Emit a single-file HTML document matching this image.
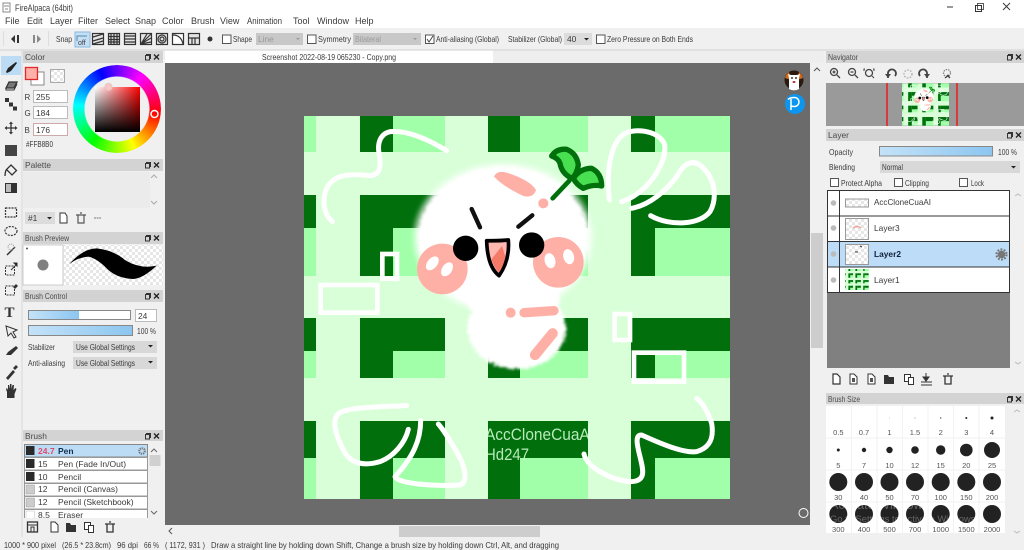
<!DOCTYPE html>
<html><head><meta charset="utf-8"><title>FireAlpaca</title>
<style>
html,body{margin:0;padding:0;background:#f0f0f0;width:1024px;height:550px;overflow:hidden}
#root{position:relative;width:1024px;height:550px;overflow:hidden;filter:blur(.3px)}
svg{position:absolute;left:0;top:0}
text{font-family:"Liberation Sans",sans-serif;font-size:8.4px;fill:#3a3a3a}
.h{fill:#4a4a4a}
.hd{fill:#d3d3d3}
.ic{fill:#333;stroke:none}
.il{fill:none;stroke:#333;stroke-width:1.2}
.sel{fill:#d8d8d8}
.sz text{font-size:7.5px;text-anchor:middle;fill:#555}
.dots circle{fill:#222}
.wh{fill:none;stroke:#fff;stroke-width:15;stroke-linecap:round;stroke-linejoin:round}
.wr{fill:none;stroke:#fff;stroke-width:14}
#wheel{position:absolute;left:73px;top:65px;width:88px;height:88px;border-radius:50%;background:conic-gradient(from 36deg,#f0f,#f00 60deg,#ff0 120deg,#0f0 180deg,#0ff 240deg,#00f 300deg,#f0f 360deg);-webkit-mask:radial-gradient(circle,transparent 32px,#000 33px);mask:radial-gradient(circle,transparent 32px,#000 33px)}
#sq{position:absolute;left:95px;top:87px;width:45px;height:45px;background:linear-gradient(to bottom,rgba(0,0,0,0),#000),linear-gradient(to right,#fff,#f00)}
</style></head><body><div id="root">
<svg width="1024" height="550" viewBox="0 0 1024 550" xmlns="http://www.w3.org/2000/svg">
<defs>
<pattern id="chk" width="6" height="6" patternUnits="userSpaceOnUse"><rect width="6" height="6" fill="#fff"/><rect width="3" height="3" fill="#e6e6e6"/><rect x="3" y="3" width="3" height="3" fill="#e6e6e6"/></pattern>
<linearGradient id="bl" x1="0" x2="1" y1="0" y2="0"><stop offset="0" stop-color="#c4e2f8"/><stop offset="1" stop-color="#8cc6f0"/></linearGradient>
<filter id="fz" x="-20%" y="-20%" width="140%" height="140%" color-interpolation-filters="sRGB"><feTurbulence type="fractalNoise" baseFrequency=".14" numOctaves="2" seed="3"/><feDisplacementMap in="SourceGraphic" scale="24" xChannelSelector="R" yChannelSelector="G"/><feGaussianBlur stdDeviation="4"/></filter>
<filter id="hl" x="-20%" y="-20%" width="140%" height="140%"><feGaussianBlur stdDeviation="9"/></filter>
<clipPath id="cvc"><rect x="304" y="116" width="426" height="383"/></clipPath>
<clipPath id="txc"><rect x="485" y="415" width="103" height="60"/></clipPath>
<clipPath id="brc"><rect x="23" y="444" width="126" height="74"/></clipPath>
<g id="pb"><rect x="1.500" y=".5" width="4" height="4" fill="none" stroke="#333"/><rect x=".5" y="1.500" width="4" height="4.500" fill="#d3d3d3" stroke="#333"/><path d="M9 .5l5 5M14 .5l-5 5" stroke="#222" stroke-width="1.300"/></g>
<g id="pat">
<rect x="304" y="116" width="426" height="383" fill="#d8ffd8"/>
<g fill="#a0ffa8">
<rect x="304" y="116" width="12" height="36"/><rect x="304" y="195" width="12" height="81"/><rect x="304" y="318" width="12" height="60"/><rect x="304" y="421" width="12" height="78"/>
<rect x="360" y="116" width="85" height="36"/><rect x="360" y="195" width="85" height="81"/><rect x="360" y="318" width="85" height="60"/><rect x="360" y="421" width="85" height="78"/>
<rect x="488" y="116" width="100" height="36"/><rect x="488" y="195" width="100" height="81"/><rect x="488" y="318" width="100" height="60"/><rect x="488" y="421" width="100" height="78"/>
<rect x="631" y="116" width="99" height="36"/><rect x="631" y="195" width="99" height="81"/><rect x="631" y="318" width="99" height="60"/><rect x="631" y="421" width="99" height="78"/>
</g>
<g fill="#006f0c">
<rect x="304" y="195" width="12" height="33"/><rect x="304" y="318" width="12" height="33"/><rect x="304" y="421" width="12" height="37"/>
<rect x="360" y="116" width="33" height="36"/><rect x="360" y="195" width="33" height="81"/><rect x="360" y="318" width="33" height="60"/><rect x="360" y="421" width="33" height="78"/>
<rect x="393" y="195" width="52" height="33"/><rect x="393" y="318" width="52" height="33"/><rect x="393" y="421" width="52" height="37"/>
<rect x="488" y="116" width="32" height="36"/><rect x="488" y="195" width="32" height="81"/><rect x="488" y="318" width="32" height="60"/><rect x="488" y="421" width="32" height="78"/>
<rect x="520" y="195" width="68" height="33"/><rect x="520" y="318" width="68" height="33"/><rect x="520" y="421" width="68" height="37"/>
<rect x="631" y="116" width="24" height="36"/><rect x="631" y="195" width="24" height="81"/><rect x="631" y="318" width="24" height="60"/><rect x="631" y="421" width="24" height="78"/>
<rect x="655" y="195" width="75" height="33"/><rect x="655" y="318" width="75" height="33"/><rect x="655" y="421" width="75" height="37"/>
</g>
</g>
<g id="art">
<use href="#pat"/>
<g transform="translate(300,110) scale(.33333)">
<g fill="#fff" opacity=".75" filter="url(#hl)"><ellipse cx="610" cy="385" rx="268" ry="225"/></g>
<g filter="url(#fz)" fill="#fff">
<ellipse cx="610" cy="385" rx="255" ry="215"/>
<ellipse cx="650" cy="655" rx="148" ry="122"/>
<ellipse cx="640" cy="570" rx="140" ry="70"/>
</g>
<path class="wh" d="M440 122C380 85 320 60 270 65C240 72 232 100 237 130C245 170 240 195 210 197C150 190 90 190 75 250C65 290 80 320 97 335"/>
<path class="wh" d="M928 270C920 200 925 100 975 70C1020 50 1090 70 1095 110C1095 170 1040 250 965 275"/>
<path class="wh" d="M995 295C1050 285 1100 240 1130 200C1150 160 1180 145 1205 170C1250 210 1250 270 1230 305C1200 345 1110 350 1052 317"/>
<rect class="wr" x="247" y="432" width="44" height="74"/>
<rect class="wr" x="62" y="525" width="170" height="83"/>
<circle cx="427" cy="477" r="76" fill="#ffb0a6"/><circle cx="775" cy="457" r="76" fill="#ffb0a6"/>
<g fill="#fff"><ellipse cx="397" cy="460" rx="15" ry="24" transform="rotate(40 397 460)"/><ellipse cx="441" cy="478" rx="15" ry="23" transform="rotate(35 441 478)"/><ellipse cx="750" cy="452" rx="16" ry="23" transform="rotate(-15 750 452)"/><ellipse cx="806" cy="440" rx="16" ry="23" transform="rotate(-15 806 440)"/></g>
<circle cx="497" cy="415" r="38" fill="#000"/><circle cx="695" cy="405" r="38" fill="#000"/>
<path d="M515 297L540 352M655 350L697 316" stroke="#111" stroke-width="13" stroke-linecap="round" fill="none"/>
<path d="M560 392Q595 393 625 390Q630 450 597 497Q562 470 560 392Z" fill="#ffb8b0" stroke="#000" stroke-width="11" stroke-linejoin="round"/>
<path d="M606 408L616 440Q610 470 597 488Q582 472 574 448Z" fill="#f57a68"/>
<path d="M582 200Q590 180 620 188Q690 210 708 240Q700 265 670 258Q610 230 582 200Z" fill="#ffb0a6"/>
<circle cx="730" cy="280" r="15" fill="#ffb0a6"/>
<path d="M758 265L808 212" stroke="#00700c" stroke-width="14" stroke-linecap="round" fill="none"/>
<path d="M755 138Q770 115 800 118Q830 130 835 165Q830 195 815 205Q785 190 780 160Q775 145 755 138Z" fill="#48e050" stroke="#00700c" stroke-width="16" stroke-linejoin="round"/>
<path d="M820 205Q840 175 875 175Q905 190 905 228Q880 222 850 235Q830 225 820 205Z" fill="#48e050" stroke="#00700c" stroke-width="16" stroke-linejoin="round"/>
<g transform="translate(0,570)">
<circle cx="632" cy="38" r="15" fill="#ffb0a6"/>
<path d="M672 38L762 32" stroke="#ffb0a6" stroke-width="28" stroke-linecap="round" fill="none"/>
<path d="M705 165L758 100" stroke="#ffb0a6" stroke-width="31" stroke-linecap="round" fill="none"/>
<path class="wh" d="M320 317C260 320 170 320 125 335C90 350 105 400 130 450C150 490 190 500 240 485C280 470 315 430 325 388"/>
<path class="wh" d="M362 362C362 420 340 470 285 530C290 550 400 560 480 555C505 545 495 500 475 465C455 430 435 395 415 372"/>
<path class="wh" d="M852 462C860 500 930 540 990 545C1040 545 1030 510 1020 470C1010 430 1005 405 1025 405C1080 430 1150 460 1190 455C1240 440 1240 400 1235 370C1225 340 1210 310 1190 295"/>
<rect class="wr" x="944" y="42" width="46" height="78"/>
<rect class="wr" x="1002" y="158" width="150" height="87"/>
</g>
</g>
</g>
</defs>

<!-- title + menu -->
<rect width="1024" height="28" fill="#fff"/>
<rect x="3" y="3" width="7" height="9" fill="none" stroke="#888" stroke-width="1"/><path d="M4 6h5M5 9h3" stroke="#888"/>
<text x="15" y="11" style="font-size:9px" textLength="58" lengthAdjust="spacingAndGlyphs">FireAlpaca (64bit)</text>
<path d="M947 7h6" stroke="#333" stroke-width="1"/>
<rect x="975.500" y="5.500" width="6" height="6" fill="#fff" stroke="#333"/><rect x="977.500" y="3.500" width="6" height="6" fill="none" stroke="#333" stroke-width=".8"/>
<path d="M1003 3l7 7M1010 3l-7 7" stroke="#333" stroke-width=".9"/>
<g>
<text x="5" y="24" style="font-size:9px">File</text><text x="27" y="24" style="font-size:9px">Edit</text><text x="50" y="24" style="font-size:9px">Layer</text><text x="78" y="24" style="font-size:9px">Filter</text><text x="105" y="24" style="font-size:9px">Select</text><text x="135" y="24" style="font-size:9px">Snap</text><text x="162" y="24" style="font-size:9px">Color</text><text x="191" y="24" style="font-size:9px">Brush</text><text x="220" y="24" style="font-size:9px">View</text><text x="247" y="24" style="font-size:9px" textLength="35" lengthAdjust="spacingAndGlyphs">Animation</text><text x="293" y="24" style="font-size:9px">Tool</text><text x="317" y="24" style="font-size:9px">Window</text><text x="355" y="24" style="font-size:9px">Help</text>
</g>

<!-- toolbar -->
<rect y="28" width="1024" height="22" fill="#f0f0f0"/>
<path d="M0 50H1024" stroke="#cfcfcf"/>
<path d="M3.500 31v15M48.500 31v15" stroke="#ddd"/>
<path d="M17 35v8h2v-8zM15 35l-4 4 4 4z" fill="#333"/>
<path d="M33 35v8h2v-8zM37 35l4 4-4 4z" fill="#888"/>
<text x="56" y="42" textLength="16" lengthAdjust="spacingAndGlyphs">Snap</text>
<rect x="75" y="32" width="15" height="15" fill="#c5dff5" stroke="#88b8e0"/>
<text x="78" y="45" style="font-size:7px">off</text><path d="M77 41v-5h10" stroke="#58a" fill="none"/>
<g class="il" stroke-width=".9">
<rect x="92.500" y="33.500" width="11" height="11" fill="#e4e4e4"/><path d="M93 37l10-3M93 41l10-3M93 44l10-3"/>
<rect x="108.500" y="33.500" width="11" height="11" fill="#ddd"/><path d="M111 34v10M114 34v10M117 34v10M109 36.500h10M109 39.500h10M109 42h10"/>
<rect x="124.500" y="33.500" width="11" height="11" fill="#e4e4e4"/><path d="M125 36h10M125 39h10M125 42h10"/>
<rect x="140.500" y="33.500" width="11" height="11" fill="#e4e4e4"/><path d="M141 44l10-10M141 44l10-6M141 44l6-10M141 44l10-2"/>
<rect x="156.500" y="33.500" width="11" height="11" fill="#e4e4e4"/><circle cx="162" cy="39" r="4"/><circle cx="162" cy="39" r="2"/>
<rect x="172.500" y="33.500" width="11" height="11" fill="#fff"/><path d="M173 35q8 0 10 9"/>
<rect x="188.500" y="33.500" width="11" height="11" fill="#e4e4e4"/><path d="M189 38h10M192 38v6M195 38v6"/>
</g>
<circle cx="210" cy="39" r="2.500" fill="#333"/>
<rect x="222.500" y="35" width="8.500" height="8.500" fill="#fff" stroke="#555"/>
<text x="233" y="42" textLength="19" lengthAdjust="spacingAndGlyphs">Shape</text>
<rect x="256" y="33" width="47" height="12" fill="#c8c8c8"/><text x="258" y="42" style="fill:#999">Line</text><path d="M296 38l4 0-2 2z" fill="#999"/>
<rect x="307.500" y="35" width="8.500" height="8.500" fill="#fff" stroke="#555"/>
<text x="318" y="42" textLength="33" lengthAdjust="spacingAndGlyphs">Symmetry</text>
<rect x="353" y="33" width="68" height="12" fill="#c8c8c8"/><text x="355" y="42" style="fill:#999" textLength="26" lengthAdjust="spacingAndGlyphs">Bilateral</text><path d="M413 38l4 0-2 2z" fill="#999"/>
<rect x="425.500" y="35" width="8.500" height="8.500" fill="#fff" stroke="#555"/><path d="M427 39l2 3 4-6" stroke="#444" fill="none"/>
<text x="436" y="42" textLength="63" lengthAdjust="spacingAndGlyphs">Anti-aliasing (Global)</text>
<text x="508" y="42" textLength="54" lengthAdjust="spacingAndGlyphs">Stabilizer (Global)</text>
<rect x="564" y="33" width="28" height="12" fill="#dcdcdc"/><text x="567" y="42">40</text><path d="M584 38l5 0-2.500 2.500z" fill="#222"/>
<rect x="596.500" y="35" width="8.500" height="8.500" fill="#fff" stroke="#555"/>
<text x="607" y="42" textLength="86" lengthAdjust="spacingAndGlyphs">Zero Pressure on Both Ends</text>

<!-- tab -->
<rect x="165" y="50.500" width="328" height="13" fill="#fff"/>
<text x="262" y="60" style="font-size:8px" textLength="134" lengthAdjust="spacingAndGlyphs">Screenshot 2022-08-19 065230 - Copy.png</text>
<rect x="493" y="51" width="331" height="12" fill="#eeeeee"/>

<!-- workspace -->
<rect x="165" y="63" width="645" height="462" fill="#6b6b6b"/>
<use href="#art" clip-path="url(#cvc)"/>
<g clip-path="url(#txc)"><text x="485" y="440" style="font-size:16.500px;fill:#d8ffd8" fill-opacity=".85" textLength="109" lengthAdjust="spacingAndGlyphs">AccCloneCuaAI</text><text x="485" y="460" style="font-size:16.500px;fill:#d8ffd8" fill-opacity=".85" textLength="44" lengthAdjust="spacingAndGlyphs">Hd247</text></g>
<circle cx="794" cy="80" r="9.500" fill="#2a1a10"/><path d="M785 78a9.500 9.500 0 0 1 4-6l2 8zM803 78a9.500 9.500 0 0 0-4-6l-2 8z" fill="#d06a1c"/><path d="M789 89v-11l-1-4 3 1h6l3-1-1 4v11a9.500 9.500 0 0 1-10 0z" fill="#fff"/><circle cx="792" cy="78" r=".9" fill="#000"/><circle cx="796" cy="78" r=".9" fill="#000"/><ellipse cx="794" cy="82" rx="1.500" ry="1" fill="#a33"/>
<circle cx="795" cy="104" r="10" fill="#0c96f0"/><path d="M791 110v-11M788 99.500q2-2 6.500-2a4 4 0 0 1 0 9q-2 0-3.500-.5" stroke="#fff" stroke-width="1.500" fill="none"/>
<circle cx="803.500" cy="513" r="4.500" fill="none" stroke="#fff" stroke-width="1"/>
<!-- scrollbars -->
<rect x="810" y="63" width="14" height="462" fill="#f0f0f0"/>
<rect x="811" y="233" width="12" height="115" fill="#cdcdcd"/>
<path d="M814 71l3-3 3 3" fill="none" stroke="#555"/>
<rect x="165" y="525" width="659" height="12" fill="#f0f0f0"/>
<rect x="399" y="526" width="141" height="11" fill="#cdcdcd"/>
<path d="M172 528l-3 3 3 3" fill="none" stroke="#555"/>

<!-- tool column -->
<rect x="1" y="56" width="20" height="19" fill="#bcdcf5"/>
<path d="M22 50V537" stroke="#d8d8d8"/>
<path d="M6 72l2-4 8-6 1 1-6 8-4 2z" fill="#222"/>
<path d="M6 88l3-6h8l-3 6z" fill="#777" stroke="#333" stroke-width="1.300"/><path d="M6 88v2h8l3-6" fill="none" stroke="#333"/>
<g class="ic"><rect x="5" y="98" width="4" height="4"/><rect x="9" y="102.500" width="4" height="4"/><rect x="13" y="106.500" width="4" height="4"/></g>
<path d="M11 123v10M6 128h10" stroke="#333" stroke-width="1.300"/><path d="M11 121.500l-2 2.500h4zM11 134.500l-2-2.500h4zM4.500 128l2.500-2v4zM17.500 128l-2.500-2v4z" class="ic"/>
<rect x="5" y="145" width="12" height="11" fill="#444"/>
<path d="M11 165l5.500 5.500-4.500 4.500-5.500-5.500zM6 170q-1 3-1 6" fill="none" stroke="#333" stroke-width="1.300"/>
<rect x="5" y="183" width="12" height="10" fill="#333"/><rect x="6" y="184" width="5" height="8" fill="#bbb"/>
<rect x="5.500" y="208" width="11" height="9" fill="none" stroke="#333" stroke-width="1.200" stroke-dasharray="2 1"/>
<ellipse cx="11" cy="231" rx="6" ry="4.500" fill="none" stroke="#333" stroke-width="1.200" stroke-dasharray="2 1.200"/>
<path d="M7 255l8-8" stroke="#333" stroke-width="1.500"/><circle cx="11" cy="247" r="3" fill="none" stroke="#999" stroke-dasharray="1 1"/>
<rect x="5.500" y="266" width="9" height="9" fill="none" stroke="#333" stroke-dasharray="2 1"/><path d="M11 270l5-5M17 263l-3 0 3 3z" stroke="#333"/>
<rect x="5.500" y="286" width="9" height="9" fill="none" stroke="#333" stroke-dasharray="2 1"/><path d="M13 287l3-3 2 2-3 3z" fill="#333"/>
<text x="4.500" y="317" style="font-family:'Liberation Serif',serif;font-size:15px;font-weight:bold;fill:#333">T</text>
<path d="M6 326l11 4-4 2 3 5-2 1-3-5-3 3z" fill="#eee" stroke="#333"/>
<path d="M6 355l2-3 8-6 2 2-7 7z" fill="#333"/>
<path d="M6 378l7-8 2 2-7 8zM13 368l3-3 2 2-3 3z" fill="#333"/>
<path d="M7 398v-6l-1-3 1-1 1 2v-5h1l.5 4 .5-5h1.500v5l1-4h1.500l-.5 5 2-2 1 1-2 5v4z" fill="#333"/>

<!-- left panels -->
<g>
<rect x="23" y="51" width="140" height="12" class="hd"/><text class="h" x="25" y="60">Color</text>
<use href="#pb" x="145" y="54"/>
<rect x="31" y="72" width="13" height="13" fill="#fff" stroke="#888"/>
<rect x="25.500" y="67.500" width="12" height="12" fill="#ffb0a8" stroke="#e02828" stroke-width="1.300"/>
<rect x="50.500" y="69.500" width="14" height="13" fill="url(#chk)" stroke="#aaa"/>
<text x="24.500" y="100" style="font-size:8px">R</text><rect x="33.500" y="90.500" width="34" height="12" fill="#fff" stroke="#bbb"/><text x="36" y="100">255</text>
<text x="24.500" y="116" style="font-size:8px">G</text><rect x="33.500" y="106.500" width="34" height="12" fill="#fff" stroke="#bbb"/><text x="36" y="116">184</text>
<text x="24.500" y="133" style="font-size:8px">B</text><rect x="33.500" y="123.500" width="34" height="12" fill="#fff" stroke="#caa"/><text x="36" y="133">176</text>
<text x="26" y="147" style="font-size:7.800px" textLength="27" lengthAdjust="spacingAndGlyphs">#FFB8B0</text>

<rect x="23" y="159" width="140" height="12" class="hd"/><text class="h" x="25" y="168">Palette</text>
<use href="#pb" x="145" y="162"/>
<rect x="23" y="172" width="127" height="36" fill="#ebebeb"/>
<path d="M151 178l3-3 3 3M151 201l3 3 3-3" fill="none" stroke="#aaa"/>
<rect x="25" y="212" width="30" height="12" fill="#dcdcdc"/><text x="28" y="221">#1</text><path d="M47 217l5 0-2.500 2.500z" fill="#222"/>
<path d="M60 213h5l2 3v7h-7z" fill="#fff" stroke="#333"/>
<path d="M76 215h10M78 215v8h6v-8M80 213h2" fill="none" stroke="#555" stroke-width="1.200"/>
<path d="M94 218h7" stroke="#777" stroke-dasharray="2 .6"/>

<rect x="23" y="232" width="140" height="12" class="hd"/><text class="h" x="25" y="241" textLength="44" lengthAdjust="spacingAndGlyphs">Brush Preview</text>
<use href="#pb" x="145" y="235"/>
<rect x="64" y="245" width="99" height="40" fill="url(#chk)"/>
<rect x="23" y="245" width="40" height="40" fill="#fff" stroke="#ccc"/>
<circle cx="43" cy="265" r="5.500" fill="#808080"/><circle cx="27" cy="248.500" r="1" fill="#555"/>
<path transform="translate(0,180) scale(.3333)" d="M208 252Q250 205 290 205Q340 210 375 240Q420 268 470 257Q430 295 400 297Q350 295 320 265Q290 235 265 230Q235 232 208 252Z" fill="#000"/>

<rect x="23" y="290" width="140" height="12" class="hd"/><text class="h" x="25" y="299" textLength="42" lengthAdjust="spacingAndGlyphs">Brush Control</text>
<use href="#pb" x="145" y="293"/>
<rect x="28.500" y="310.500" width="102" height="9" fill="#fff" stroke="#888"/><rect x="29" y="311" width="50" height="8" fill="url(#bl)"/>
<rect x="135.500" y="309.500" width="21" height="12" fill="#fff" stroke="#bbb"/><text x="138" y="319">24</text>
<rect x="28.500" y="325.500" width="104" height="10" fill="url(#bl)" stroke="#888"/><text x="137" y="334" textLength="19" lengthAdjust="spacingAndGlyphs">100 %</text>
<text x="28" y="350" textLength="27" lengthAdjust="spacingAndGlyphs">Stabilizer</text><rect x="73" y="341" width="84" height="12" class="sel"/><text x="76" y="350" textLength="59" lengthAdjust="spacingAndGlyphs">Use Global Settings</text><path d="M148 345l5 0-2.500 2.500z" fill="#222"/>
<text x="28" y="366" textLength="37" lengthAdjust="spacingAndGlyphs">Anti-aliasing</text><rect x="73" y="357" width="84" height="12" class="sel"/><text x="76" y="366" textLength="59" lengthAdjust="spacingAndGlyphs">Use Global Settings</text><path d="M148 361l5 0-2.500 2.500z" fill="#222"/>

<rect x="23" y="430" width="140" height="11" class="hd"/><text class="h" x="25" y="439">Brush</text>
<use href="#pb" x="145" y="433"/>
<g clip-path="url(#brc)">
<rect x="24.500" y="444.500" width="123" height="12.500" fill="#bcdcf5" stroke="#888"/>
<rect x="24.500" y="457.500" width="123" height="12.500" fill="#fff" stroke="#999"/>
<rect x="24.500" y="470.500" width="123" height="12.500" fill="#fff" stroke="#999"/>
<rect x="24.500" y="483.500" width="123" height="12.500" fill="#fff" stroke="#999"/>
<rect x="24.500" y="496.500" width="123" height="12.500" fill="#fff" stroke="#999"/>
<rect x="24.500" y="509.500" width="123" height="12.500" fill="#fff" stroke="#999"/>
<rect x="26" y="446" width="8.500" height="9" fill="#2a2a2a"/><rect x="26" y="459" width="8.500" height="9" fill="#2a2a2a"/><rect x="26" y="472" width="8.500" height="9" fill="#2a2a2a"/>
<rect x="26" y="485" width="8.500" height="9" fill="#ccc" stroke="#999" stroke-width=".5"/><rect x="26" y="498" width="8.500" height="9" fill="#ccc" stroke="#999" stroke-width=".5"/><rect x="26" y="511" width="8.500" height="9" fill="#fff" stroke="#bbb" stroke-width=".5"/>
<text x="38" y="454" style="font-size:8.500px;font-weight:bold;fill:#e04a68">24.7</text><text x="58" y="454" style="font-size:8.500px;font-weight:bold;fill:#103050">Pen</text>
<circle cx="142" cy="451" r="2.800" fill="none" stroke="#777" stroke-width="2" stroke-dasharray="1.300 .8"/>
<text x="38" y="467" style="font-size:8.500px">15</text><text x="58" y="467" style="font-size:8.500px">Pen (Fade In/Out)</text>
<text x="38" y="480" style="font-size:8.500px">10</text><text x="58" y="480" style="font-size:8.500px">Pencil</text>
<text x="38" y="492" style="font-size:8.500px">12</text><text x="58" y="492" style="font-size:8.500px">Pencil (Canvas)</text>
<text x="38" y="505" style="font-size:8.500px">12</text><text x="58" y="505" style="font-size:8.500px">Pencil (Sketchbook)</text>
<text x="38" y="518" style="font-size:8.500px">8.5</text><text x="58" y="518" style="font-size:8.500px">Eraser</text>
</g>
<path d="M151 452l3-3 3 3M151 511l3 3 3-3" fill="none" stroke="#666"/><rect x="149.500" y="455" width="11" height="11" fill="#d0d0d0"/>
<rect x="27.500" y="522" width="10" height="10" fill="none" stroke="#333" stroke-width="1.300"/><path d="M28 525h9M31 527h3v5h-3z" stroke="#333" fill="none"/>
<path d="M51 522h4l3 3v7h-7z" fill="#fff" stroke="#333"/>
<path d="M66 523h4l1 2h5v7H66z" fill="#333"/>
<rect x="84.500" y="522.500" width="6" height="7" fill="#fff" stroke="#333"/><rect x="88.500" y="525.500" width="5" height="7" fill="#fff" stroke="#333"/>
<path d="M105 524h10M107 524v8h6v-8M109 522h2" fill="none" stroke="#333" stroke-width="1.300"/>
</g>

<!-- status -->
<text x="4" y="548" style="font-size:8.300px" textLength="52" lengthAdjust="spacingAndGlyphs">1000 * 900 pixel</text>
<text x="62" y="548" style="font-size:8.300px" textLength="49" lengthAdjust="spacingAndGlyphs">(26.5 * 23.8cm)</text>
<text x="117" y="548" style="font-size:8.300px" textLength="21" lengthAdjust="spacingAndGlyphs">96 dpi</text>
<text x="144" y="548" style="font-size:8.300px" textLength="15" lengthAdjust="spacingAndGlyphs">66 %</text>
<text x="165" y="548" style="font-size:8.300px" textLength="40" lengthAdjust="spacingAndGlyphs">( 1172, 931 )</text>
<text x="211" y="548" style="font-size:8.300px" textLength="348" lengthAdjust="spacingAndGlyphs">Draw a straight line by holding down Shift, Change a brush size by holding down Ctrl, Alt, and dragging</text>

<!-- navigator -->
<rect x="826" y="51" width="198" height="12" class="hd"/><text class="h" x="828" y="60" textLength="30" lengthAdjust="spacingAndGlyphs">Navigator</text>
<use href="#pb" x="1007" y="54"/>
<g fill="none" stroke="#444" stroke-width="1.300">
<circle cx="834" cy="72" r="3.500"/><path d="M837 75l3 3M832.500 72h3M834 70.500v3"/>
<circle cx="852" cy="72" r="3.500"/><path d="M855 75l3 3M850.500 72h3"/>
<circle cx="869" cy="73" r="3.500"/><path d="M872 76l2 2M865 69h-1v2M873 69h1v2" stroke-width="1"/>
<path d="M888 78v-4a4 4 0 1 1 7 2" stroke-width="1.800"/><path d="M885 74l3 4 3-4" fill="#444" stroke="none"/>
<circle cx="908" cy="74" r="4" stroke="#aaa" stroke-dasharray="1.500 1.500"/>
<path d="M927 78v-4a4 4 0 1 0-7 2" stroke-width="1.800"/><path d="M930 74l-3 4-3-4" fill="#444" stroke="none"/>
<circle cx="947" cy="73" r="3.500" stroke="#888" stroke-dasharray="1.500 1"/><path d="M945 78l4-3M950 78l-3-3"/>
</g>
<rect x="826" y="83" width="198" height="43" fill="#9a9a9a"/>
<rect x="886" y="83" width="2" height="43" fill="#d83a3a"/><rect x="956" y="83" width="2" height="43" fill="#d83a3a"/>
<svg x="902" y="83" width="47" height="43" viewBox="304 116 426 383"><use href="#art"/></svg>

<!-- layer -->
<rect x="826" y="129" width="198" height="12" class="hd"/><text class="h" x="828" y="138">Layer</text>
<use href="#pb" x="1007" y="132"/>
<text x="829" y="155" textLength="24" lengthAdjust="spacingAndGlyphs">Opacity</text>
<rect x="879.500" y="146.500" width="113" height="9.500" fill="url(#bl)" stroke="#888"/><text x="998" y="155" textLength="19" lengthAdjust="spacingAndGlyphs">100 %</text>
<text x="829" y="170" textLength="26" lengthAdjust="spacingAndGlyphs">Blending</text>
<rect x="880" y="161" width="140" height="12" class="sel"/><text x="882" y="170" textLength="21" lengthAdjust="spacingAndGlyphs">Normal</text><path d="M1011 166l5 0-2.500 2.500z" fill="#222"/>
<rect x="830.500" y="178.500" width="8" height="8" fill="#fff" stroke="#555"/><text x="841" y="186" textLength="41" lengthAdjust="spacingAndGlyphs">Protect Alpha</text>
<rect x="894.500" y="178.500" width="8" height="8" fill="#fff" stroke="#555"/><text x="905" y="186" textLength="24" lengthAdjust="spacingAndGlyphs">Clipping</text>
<rect x="959.500" y="178.500" width="8" height="8" fill="#fff" stroke="#555"/><text x="971" y="186" textLength="13" lengthAdjust="spacingAndGlyphs">Lock</text>

<rect x="827" y="190" width="183" height="178" fill="#808080"/>
<rect x="827.500" y="190.500" width="182" height="25.500" fill="#fff" stroke="#333"/>
<rect x="827.500" y="216" width="182" height="25.500" fill="#fff" stroke="#333"/>
<rect x="827.500" y="241.500" width="182" height="25.500" fill="#bcdcf8" stroke="#333"/>
<rect x="827.500" y="267" width="182" height="25.500" fill="#fff" stroke="#333"/>
<path d="M839.500 190v102" stroke="#333"/>
<g fill="#bbb"><circle cx="833.500" cy="203" r="2.800"/><circle cx="833.500" cy="228" r="2.800"/><circle cx="833.500" cy="254" r="2.800"/><circle cx="833.500" cy="280" r="2.800"/></g>
<rect x="845.500" y="199" width="23" height="8" fill="url(#chk)" stroke="#999"/>
<rect x="845.500" y="218.500" width="23" height="21" fill="url(#chk)" stroke="#999"/><path d="M853 228q4-3 8 0" stroke="#f0a8a0" stroke-width="1.500" fill="none"/>
<rect x="845.500" y="244.500" width="23" height="20" fill="url(#chk)" stroke="#999"/><path d="M855 252h3M860 246l2 1" stroke="#333"/>
<svg x="845" y="269" width="24" height="21" viewBox="304 116 426 383"><use href="#pat"/></svg>
<text x="874" y="205" textLength="57" lengthAdjust="spacingAndGlyphs">AccCloneCuaAI</text>
<text x="874" y="231">Layer3</text>
<text x="874" y="257" style="font-weight:bold;fill:#102038">Layer2</text>
<text x="874" y="283">Layer1</text>
<circle cx="1001.500" cy="254.500" r="3.800" fill="#777"/><circle cx="1001.500" cy="254.500" r="5" fill="none" stroke="#777" stroke-width="2.200" stroke-dasharray="1.800 1.400"/>
<path d="M1015 196l3-2 3 2M1015 362l3 2 3-2" fill="none" stroke="#bbb"/>
<g>
<path d="M833 374h4l3 3v7h-7z" fill="#fff" stroke="#333" stroke-width="1.200"/>
<path d="M850 374h4l3 3v7h-7z" fill="#fff" stroke="#333"/><rect x="852" y="378" width="3" height="4" fill="#555"/>
<path d="M868 374h4l3 3v7h-7z" fill="#fff" stroke="#333"/><rect x="870" y="378" width="3" height="4" fill="#555"/>
<path d="M884 375h4l1 2h5v7h-10z" fill="#333"/>
<rect x="904.500" y="374.500" width="6" height="7" fill="#fff" stroke="#333"/><rect x="908.500" y="377.500" width="5" height="7" fill="#fff" stroke="#333"/>
<path d="M926 373v6M923 377l3 4 3-4z" stroke="#333" fill="#333"/><path d="M921 382h11M921 385h11" stroke="#333"/>
<path d="M943 376h10M945 376v8h6v-8M947 374h2" fill="none" stroke="#333" stroke-width="1.300"/>
</g>

<!-- brush size -->
<rect x="826" y="393" width="198" height="11" class="hd"/><text class="h" x="828" y="402" textLength="32" lengthAdjust="spacingAndGlyphs">Brush Size</text>
<use href="#pb" x="1007" y="396"/>
<rect x="826" y="406" width="179" height="127" fill="#fff"/>
<path d="M851.500 406v127M877 406v127M902.500 406v127M928 406v127M953.500 406v127M979 406v127M826 438h179M826 470h179M826 502h179" stroke="#f2f2f2"/>
<path d="M1014 412l3-2 3 2M1014 531l3 2 3-2" fill="none" stroke="#bbb"/>
<g class="dots">
<circle cx="889.500" cy="418" r=".3"/><circle cx="915" cy="418" r=".4"/><circle cx="940.700" cy="418" r=".6"/><circle cx="966.300" cy="418" r="1"/><circle cx="992" cy="418" r="1.500"/>
<circle cx="838.300" cy="450" r="1.500"/><circle cx="864" cy="450" r="2.200"/><circle cx="889.500" cy="450" r="3.200"/><circle cx="915" cy="450" r="3.800"/><circle cx="940.700" cy="450" r="4.700"/><circle cx="966.300" cy="450" r="6.300"/><circle cx="992" cy="450" r="8"/>
<circle cx="838.300" cy="482" r="9"/><circle cx="864" cy="482" r="9"/><circle cx="889.500" cy="482" r="9"/><circle cx="915" cy="482" r="9"/><circle cx="940.700" cy="482" r="9"/><circle cx="966.300" cy="482" r="9"/><circle cx="992" cy="482" r="9"/>
<circle cx="838.300" cy="514" r="9"/><circle cx="864" cy="514" r="9"/><circle cx="889.500" cy="514" r="9"/><circle cx="915" cy="514" r="9"/><circle cx="940.700" cy="514" r="9"/><circle cx="966.300" cy="514" r="9"/><circle cx="992" cy="514" r="9"/>
</g>
<g class="sz">
<text x="838.300" y="435">0.5</text><text x="864" y="435">0.7</text><text x="889.500" y="435">1</text><text x="915" y="435">1.5</text><text x="940.700" y="435">2</text><text x="966.300" y="435">3</text><text x="992" y="435">4</text>
<text x="838.300" y="468">5</text><text x="864" y="468">7</text><text x="889.500" y="468">10</text><text x="915" y="468">12</text><text x="940.700" y="468">15</text><text x="966.300" y="468">20</text><text x="992" y="468">25</text>
<text x="838.300" y="500">30</text><text x="864" y="500">40</text><text x="889.500" y="500">50</text><text x="915" y="500">70</text><text x="940.700" y="500">100</text><text x="966.300" y="500">150</text><text x="992" y="500">200</text>
<text x="838.300" y="532">300</text><text x="864" y="532">400</text><text x="889.500" y="532">500</text><text x="915" y="532">700</text><text x="940.700" y="532">1000</text><text x="966.300" y="532">1500</text><text x="992" y="532">2000</text>
</g>
<text x="830" y="509" style="font-size:12.500px;fill:#fff;fill-opacity:.3" textLength="99" lengthAdjust="spacingAndGlyphs">Activate Windows</text>
<text x="830" y="522" style="font-size:9.200px;fill:#fff;fill-opacity:.3" textLength="148" lengthAdjust="spacingAndGlyphs">Go to Settings to activate Windows.</text>
</svg>
<div id="wheel"></div>
<div id="sq"></div>
<svg width="1024" height="550" viewBox="0 0 1024 550" style="pointer-events:none">
<circle cx="108.500" cy="87" r="3.500" fill="#f8c8c4" stroke="#e8c0c0" stroke-width="1"/>
<circle cx="154.500" cy="114" r="3.500" fill="none" stroke="#fff" stroke-width="1.500"/>
</svg>
</div></body></html>
